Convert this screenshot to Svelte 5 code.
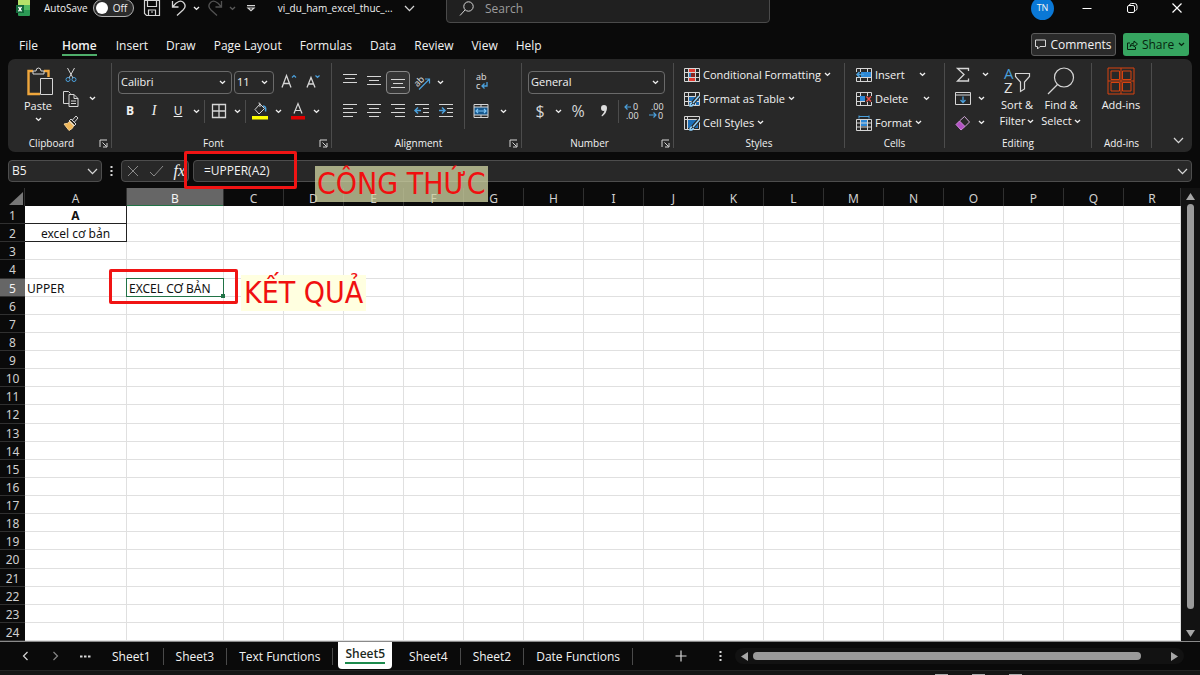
<script lang="ts">
	const menus = ['File', 'Home', 'Insert', 'Draw', 'Page Layout', 'Formulas', 'Data', 'Review', 'View', 'Help'];
	const columns = 'ABCDEFGHIJKLMNOPQR'.split('');
	const rows = Array.from({ length: 24 }, (_, i) => i + 1);
	const sheets = ['Sheet1', 'Sheet3', 'Text Functions', 'Sheet5', 'Sheet4', 'Sheet2', 'Date Functions'];

	const cells: Record<string, string> = {
		A1: 'A',
		A2: 'excel cơ bản',
		A5: 'UPPER',
		B5: 'EXCEL CƠ BẢN'
	};

	let activeMenu = $state('Home');
	let activeSheet = $state('Sheet5');
	let formula = $state('=UPPER(A2)');
	let autosave = $state(false);
</script>

{#snippet chevron()}
	<svg class="chev" width="7" height="5" viewBox="0 0 7 5"><path d="M1 1l2.5 2.4L6 1" /></svg>
{/snippet}

{#snippet bigChevron()}
	<svg width="11" height="7" viewBox="0 0 11 7"><path d="M1 1l4.5 4.6L10 1" stroke-width="1.3" /></svg>
{/snippet}

{#snippet drop(label: string)}
	<button class="drop" aria-label={label}>{@render chevron()}</button>
{/snippet}

{#snippet launcher(label: string)}
	<button class="launcher" aria-label={label}>
		<svg width="9" height="9" viewBox="0 0 9 9"><path d="M8 1H1v7M3.5 3.5L7.5 7.5M8 4v4H4" /></svg>
	</button>
{/snippet}

{#snippet dots()}
	<svg class="dots" width="3" height="12" viewBox="0 0 3 12"><path d="M1.5 1v2M1.5 5v2M1.5 9v2" stroke-width="2" /></svg>
{/snippet}

{#snippet lines(list: number[][])}
	<svg width="16" height="16" viewBox="0 0 16 16">
		{#each list as [x1, x2, y]}
			<path d="M{x1} {y}.5H{x2}" />
		{/each}
	</svg>
{/snippet}

{#snippet tableIcon()}
	<path d="M.5 1.5h15v13H.5zM.5 5.5h15M.5 10.5h15M4.5 1.5v13M11.5 1.5v13" />
{/snippet}

<div class="app">
	<header class="titlebar">
		<div class="quick">
			<svg class="logo" width="14" height="17" viewBox="0 0 14 17">
				<path d="M2 0h12v5H2z" fill="#b6e26a" stroke="none" />
				<path d="M2 5h12v10q0 1-1 1H3q-1 0-1-1z" fill="#2c9a55" stroke="none" />
				<path d="M8 5h6v5H8z" fill="#51bb62" stroke="none" />
				<path d="M0 5h8v8H0z" fill="#12683a" stroke="none" />
				<path d="M2.5 6.8l3 4.6M5.5 6.8l-3 4.6" stroke="#fff" stroke-width="1.3" />
			</svg>
			<label class="autosave">
				AutoSave
				<input type="checkbox" bind:checked={autosave} />
				<span class="switch"><i></i>{autosave ? 'On' : 'Off'}</span>
			</label>
			<button class="tool" aria-label="Save">
				<svg width="16" height="16" viewBox="0 0 16 16"><path d="M.5.5h15v15h-13l-2-2zM3.5.5v6h9v-6M4.5 15.5v-5.5h7v5.5M7 12h2" stroke-width="1.2" /></svg>
			</button>
			<button class="tool undo" aria-label="Undo">
				<svg width="16" height="16" viewBox="0 0 16 16"><path d="M1.5 1v6h6M2 6.5C6 1 10 0 12.5 2.5s2 5-.5 7.500l-6 5.500" stroke-width="1.3" /></svg>
			</button>
			{@render drop('Undo history')}
			<button class="tool dim" aria-label="Redo">
				<svg width="16" height="16" viewBox="0 0 16 16"><path d="M14.5 1v6h-6M14 6.5C10 1 6 0 3.5 2.5s-2 5 .5 7.500l6 5.500" stroke-width="1.3" /></svg>
			</button>
			<span class="dim">{@render drop('Redo history')}</span>
			<button class="tool customise" aria-label="Customize Quick Access Toolbar">
				<svg width="8" height="7" viewBox="0 0 8 7"><path d="M0 .7h8M1 3l3 2.8L7 3z" stroke-width="1.2" /></svg>
			</button>
			<button class="filename">vi_du_ham_excel_thuc_... {@render bigChevron()}</button>
		</div>
		<label class="search">
			<svg width="16" height="16" viewBox="0 0 16 16"><circle cx="9.5" cy="5.5" r="4.7" /><path d="M6 9L1 14.5" /></svg>
			<input type="text" placeholder="Search" aria-label="Search" />
		</label>
		<div class="window">
			<button class="avatar">TN</button>
			<button aria-label="Minimize"><svg width="12" height="12" viewBox="0 0 12 12"><path d="M1.5 6.5h9" /></svg></button>
			<button aria-label="Restore"><svg width="12" height="12" viewBox="0 0 12 12"><rect x="1.5" y="3.5" width="7" height="7" rx="1.5" /><path d="M3.5 3q.3-1.500 2-1.500h3q2.500 0 2.500 2.500v2.500q0 1.500-1.500 2" /></svg></button>
			<button aria-label="Close"><svg width="12" height="12" viewBox="0 0 12 12"><path d="M1.5 1.5l9 9M10.500 1.500l-9 9" stroke-width="1.2" /></svg></button>
		</div>
	</header>

	<nav class="menubar">
		{#each menus as menu}
			<button class="menu" class:active={menu === activeMenu} onclick={() => (activeMenu = menu)}>{menu}</button>
		{/each}
		<button class="comments">
			<svg width="11" height="11" viewBox="0 0 11 11"><path d="M.5 1h10v6.500H5L2.500 10V7.500h-2z" /></svg>
			Comments
		</button>
		<button class="share">
			<svg width="11" height="11" viewBox="0 0 11 11"><path d="M3 4H.5v6.500h8V8M3 7.500Q3.500 4 7 4V2l3.500 3L7 8V6Q4.500 6 3 7.500z" /></svg>
			Share {@render chevron()}
		</button>
	</nav>

	<div class="ribbon">
		<section class="group clipboard">
			<div class="body">
				<button class="big">
					<svg width="28" height="30" viewBox="0 0 28 30">
						<path d="M7 4H2.500v23H14M18 4h4.500v6" stroke="#efa63c" stroke-width="2.400" />
						<path d="M7 7V4h3q0-3 2.500-3T15 4h3v3z" />
						<path d="M14.500 11.500h12v16h-12z" fill="#282828" />
					</svg>
					<span>Paste</span>
					{@render chevron()}
				</button>
				<div class="stack">
					<button class="tool" aria-label="Cut">
						<svg width="12" height="16" viewBox="0 0 12 16"><path d="M2.500 1L8 11M9.500 1L4 11" /><circle cx="3" cy="12.500" r="2" stroke="#4ba0dc" /><circle cx="9" cy="12.500" r="2" stroke="#4ba0dc" /></svg>
					</button>
					<button class="tool" aria-label="Copy">
						<svg width="16" height="16" viewBox="0 0 16 16"><path d="M6 12.500H.5V.5h5l2 2" /><path d="M6 3.500h5l4 4v8H6zM11 3.500v4h4M8 10h5M8 12.500h5" /></svg>
					</button>
					<button class="tool" aria-label="Format Painter">
						<svg width="16" height="16" viewBox="0 0 16 16"><path d="M1 9q4 0 6-3l4 4q-1 4-5 5.500z" fill="#efb75b" stroke="#f3cf90" /><path d="M6 6l2-2 5 5-2 2zM9.500 5L13 1l2 2-3.500 4" /></svg>
					</button>
				</div>
				{@render drop('Copy options')}
			</div>
			<footer>Clipboard {@render launcher('Clipboard settings')}</footer>
		</section>

		<section class="group font">
			<div class="body rows">
				<div class="line">
					<label class="combo family">
						<select aria-label="Font"><option>Calibri</option></select>{@render chevron()}
					</label>
					<label class="combo size">
						<select aria-label="Font size"><option>11</option></select>{@render chevron()}
					</label>
					<button class="tool grow" aria-label="Increase font size">
						<svg width="16" height="16" viewBox="0 0 16 16"><path d="M0 13.500L4.500 1.500 9 13.500M1.500 9.500h6" stroke-width="1.300" /><path d="M10 3.500l2-2 2 2" stroke="#4ba0dc" stroke-width="1.200" /></svg>
					</button>
					<button class="tool" aria-label="Decrease font size">
						<svg width="16" height="16" viewBox="0 0 16 16"><path d="M1 13.500L5 3.500 9 13.500M2.500 10h5" stroke-width="1.300" /><path d="M9.500 1.500l2 2 2-2" stroke="#4ba0dc" stroke-width="1.200" /></svg>
					</button>
				</div>
				<div class="line">
					<button class="tool"><b>B</b></button>
					<button class="tool serif"><i>I</i></button>
					<button class="tool"><u>U</u></button>
					{@render drop('Underline style')}
					<span class="rule"></span>
					<button class="tool" aria-label="Borders">
						<svg width="16" height="16" viewBox="0 0 16 16"><path d="M1.500 1.500h13v13h-13zM8 1.500v13M1.500 8h13" stroke-width="1.300" /></svg>
					</button>
					{@render drop('Border style')}
					<span class="rule"></span>
					<button class="tool" aria-label="Fill color">
						<svg width="16" height="18" viewBox="0 0 16 18"><path d="M3 7.500L8 2l4.500 4.500L7 12z" /><path d="M8 5V2q0-1.500-1.500-1" /><path d="M11 4q3.500 0 2.500 5.500" stroke="#4ba0dc" stroke-width="1.500" /><path d="M0 14h16v3.500H0z" fill="#ffff00" stroke="none" /></svg>
					</button>
					{@render drop('Fill colors')}
					<button class="tool fontcolor" aria-label="Font color">
						<svg width="16" height="18" viewBox="0 0 16 18"><path d="M4 11.500L8 1.500l4 10M5.500 8.500h5" stroke-width="1.200" /><path d="M1 14h14v3.500H1z" fill="#e00000" stroke="none" /></svg>
					</button>
					{@render drop('Font colors')}
				</div>
			</div>
			<footer>Font {@render launcher('Font settings')}</footer>
		</section>

		<section class="group alignment">
			<div class="body split">
				<div class="rows">
					<div class="line">
						<button class="tool" aria-label="Top align">{@render lines([[1, 15, 0], [3, 13, 4], [1, 15, 8]])}</button>
						<button class="tool" aria-label="Middle align">{@render lines([[1, 15, 2], [3, 13, 6], [1, 15, 10]])}</button>
						<button class="tool pressed" aria-label="Bottom align">{@render lines([[1, 15, 5], [3, 13, 9], [1, 15, 13]])}</button>
						<button class="tool" aria-label="Orientation">
							<svg width="17" height="17" viewBox="0 0 17 17"><text x="1" y="11" transform="rotate(-45 5 9)" font-size="9">ab</text><path d="M5 15.500L15 5.500M11 5h4.500v4.500" stroke="#4ba0dc" stroke-width="1.200" /></svg>
						</button>
						{@render drop('Orientation options')}
					</div>
					<div class="line">
						<button class="tool" aria-label="Align left">{@render lines([[1, 15, 1], [1, 11, 5], [1, 15, 9], [1, 11, 13]])}</button>
						<button class="tool" aria-label="Center">{@render lines([[1, 15, 1], [3, 13, 5], [1, 15, 9], [3, 13, 13]])}</button>
						<button class="tool" aria-label="Align right">{@render lines([[1, 15, 1], [5, 15, 5], [1, 15, 9], [5, 15, 13]])}</button>
						<button class="tool" aria-label="Decrease indent">
							<svg width="16" height="16" viewBox="0 0 16 16"><path d="M1 1.500h14M9 5.500h6M9 9.500h6M1 13.500h14" /><path d="M7 7.500H1M4 4.500l-3 3 3 3" stroke="#4ba0dc" stroke-width="1.500" /></svg>
						</button>
						<button class="tool" aria-label="Increase indent">
							<svg width="16" height="16" viewBox="0 0 16 16"><path d="M1 1.500h14M9 5.500h6M9 9.500h6M1 13.500h14" /><path d="M1 7.500h6M4 4.500l3 3-3 3" stroke="#4ba0dc" stroke-width="1.500" /></svg>
						</button>
					</div>
				</div>
				<span class="rule tall"></span>
				<div class="rows">
					<div class="line">
						<button class="tool" aria-label="Wrap text">
							<svg width="16" height="20" viewBox="0 0 16 20"><text x="3" y="8" font-size="9">ab</text><text x="3" y="17" font-size="9">c</text><path d="M14 10v4H9M11.500 11.500L9 14l2.500 2.500" stroke="#4ba0dc" stroke-width="1.300" /></svg>
						</button>
					</div>
					<div class="line">
						<button class="tool" aria-label="Merge and center">
							<svg width="16" height="16" viewBox="0 0 16 16"><path d="M1 4h14v8H1z" fill="#15578d" stroke="none" /><path d="M1 1.500h14v13H1zM1 4h14M1 12h14M8 1.500V4M8 12v2.500" /><path d="M3 8h10M5 6L3 8l2 2M11 6l2 2-2 2" stroke="#7cc4f5" stroke-width="1.200" /></svg>
						</button>
						<span class="gap"></span>
						{@render drop('Merge options')}
					</div>
				</div>
			</div>
			<footer>Alignment {@render launcher('Alignment settings')}</footer>
		</section>

		<section class="group number">
			<div class="body rows">
				<div class="line">
					<label class="combo format">
						<select aria-label="Number format"><option>General</option></select>{@render chevron()}
					</label>
				</div>
				<div class="line">
					<button class="tool glyph">$</button>
					{@render drop('Currency')}
					<button class="tool glyph wide">%</button>
					<button class="tool comma" aria-label="Comma style">
						<svg width="8" height="14" viewBox="0 0 8 14"><path d="M1 4a3 3 0 0 1 6 0q0 5-5 8.500l-.5-1Q4 9 4.500 6.800 1 7.500 1 4z" fill="#ddd" stroke="none" /></svg>
					</button>
					<span class="rule"></span>
					<button class="tool" aria-label="Increase decimal">
						<svg width="18" height="20" viewBox="0 0 18 20"><text x="9" y="9" font-size="9">0</text><text x="2" y="18" font-size="9">.00</text><path d="M7 6H1M3.500 3.500L1 6l2.500 2.500" stroke="#4ba0dc" stroke-width="1.200" /></svg>
					</button>
					<button class="tool" aria-label="Decrease decimal">
						<svg width="18" height="20" viewBox="0 0 18 20"><text x="3" y="9" font-size="9">.00</text><text x="10" y="18" font-size="9">0</text><path d="M1 14h7M5.500 11.500L8 14l-2.500 2.500" stroke="#4ba0dc" stroke-width="1.200" /></svg>
					</button>
				</div>
			</div>
			<footer>Number {@render launcher('Number settings')}</footer>
		</section>

		<section class="group styles">
			<div class="body list">
				<button>
					<svg width="16" height="16" viewBox="0 0 16 16"><path d="M4 1h8v4H4zM4 10h8v4H4z" fill="#e23b31" stroke="none" /><path d="M4 5h3v5H4z" fill="#2f7fc4" stroke="none" /><path d="M7 5h5v5H7z" fill="#8c2520" stroke="none" />{@render tableIcon()}<path d="M5 2h6v3H5zM5 11h6v3H5z" fill="#e23b31" stroke="none" /></svg>
					Conditional Formatting {@render chevron()}
				</button>
				<button>
					<svg width="16" height="16" viewBox="0 0 16 16"><path d="M4 5h11v9H4z" fill="#1d6fb8" stroke="none" />{@render tableIcon()}<path d="M15 5L8 13l-2 2" stroke="#282828" stroke-width="4" /><path d="M15 5L9 12M8 12q-2 0-2 3 3 0 3.500-2" stroke="#8fd0fa" stroke-width="1.500" /></svg>
					Format as Table {@render chevron()}
				</button>
				<button>
					<svg width="16" height="16" viewBox="0 0 16 16"><path d="M3 4h11v9H3z" fill="#1d6fb8" stroke="none" /><path d="M.5 1.500h15v13H.5zM.5 4.500h15M3.500 1.500v13" /><path d="M15 5L8 13l-2 2" stroke="#282828" stroke-width="4" /><path d="M15 5L9 12M8 12q-2 0-2 3 3 0 3.500-2" stroke="#8fd0fa" stroke-width="1.500" /></svg>
					Cell Styles {@render chevron()}
				</button>
			</div>
			<footer>Styles</footer>
		</section>

		<section class="group cells">
			<div class="body list">
				<button>
					<svg width="16" height="16" viewBox="0 0 16 16">{@render tableIcon()}<path d="M5 5h10v5H5z" fill="#2b88d8" stroke="none" /><path d="M0 5h5v5H0z" fill="#282828" stroke="none" /><path d="M8 7.500H1M3.500 5L1 7.500 3.500 10" stroke="#4ba0dc" stroke-width="1.500" /></svg>
					<span class="insert">Insert</span> {@render chevron()}
				</button>
				<button>
					<svg width="16" height="16" viewBox="0 0 16 16">{@render tableIcon()}<path d="M4 5h6v5H4z" fill="#2b88d8" stroke="none" /><path d="M9 5h7v6H9z" fill="#282828" stroke="none" /><path d="M10.500 5.500l4.500 5M15 5.500l-4.500 5" stroke="#e8504a" stroke-width="1.500" /></svg>
					<span class="delete">Delete</span> {@render chevron()}
				</button>
				<button>
					<svg width="16" height="16" viewBox="0 0 16 16"><path d="M4 5h8v6H4z" fill="#2b88d8" stroke="none" /><path d="M.5 4.500h15v11H.5zM.5 8h15M.5 12h15M4.500 4.500v11M11.500 4.500v11" /><path d="M3 .500v3M13 .500v3M3 1.500h10" stroke="#4ba0dc" /></svg>
					Format {@render chevron()}
				</button>
			</div>
			<footer>Cells</footer>
		</section>

		<section class="group editing">
			<div class="body">
				<div class="stack">
					<div class="line">
						<button class="tool" aria-label="AutoSum"><svg width="14" height="16" viewBox="0 0 14 16"><path d="M12.500 4V1.500h-11L8 7.500l-6.500 6.500h11V11.500" stroke-width="1.300" /></svg></button>
						<span class="gap"></span>
						{@render drop('AutoSum options')}
					</div>
					<div class="line">
						<button class="tool" aria-label="Fill"><svg width="16" height="14" viewBox="0 0 16 14"><path d="M.5.5h15v12H.5zM.5 3h15" /><path d="M8 4.500v6M5.500 8L8 10.500 10.500 8" stroke="#4ba0dc" stroke-width="1.300" /></svg></button>
						{@render drop('Fill options')}
					</div>
					<div class="line">
						<button class="tool" aria-label="Clear"><svg width="16" height="16" viewBox="0 0 16 16"><path d="M1 9.500L4.500 6l5.500 5.500L6 15z" fill="#b352c4" stroke="#d08bdc" /><path d="M4.500 6L9.500 1.500l5 5.500-4.500 4.500" stroke="#d0a8d8" /></svg></button>
						{@render drop('Clear options')}
					</div>
				</div>
				<button class="big">
					<svg width="28" height="28" viewBox="0 0 28 28"><text x="1" y="12" font-size="15" class="blue">A</text><text x="1" y="26" font-size="15">Z</text><path d="M12.500 6.500h14v3l-5 5.500v7l-4 2.500V15l-5-5.500z" stroke-width="1.200" /></svg>
					<span>Sort &amp;</span>
					<span class="second">Filter {@render chevron()}</span>
				</button>
				<button class="big">
					<svg width="30" height="28" viewBox="0 0 30 28"><circle cx="18" cy="10.500" r="9.500" stroke-width="1.200" /><path d="M11.500 17.500L2 27" stroke-width="1.200" /></svg>
					<span>Find &amp;</span>
					<span class="second">Select {@render chevron()}</span>
				</button>
			</div>
			<footer>Editing</footer>
		</section>

		<section class="group addins">
			<div class="body">
				<button class="big">
					<svg class="orange" width="28" height="28" viewBox="0 0 28 28"><path d="M1 1h26v26H1zM4 4h8.500v8.500H4zM15.500 4H24v8.500h-8.500zM4 15.500h8.500V24H4zM15.500 15.500H24V24h-8.500zM14 1v26M1 14h26" /></svg>
					<span>Add-ins</span>
				</button>
			</div>
			<footer>Add-ins</footer>
		</section>
		<button class="collapse" aria-label="Collapse the ribbon">{@render bigChevron()}</button>
	</div>

	<div class="formulabar">
		<label class="namebox">
			<input type="text" value="B5" aria-label="Name box" />
			{@render bigChevron()}
		</label>
		{@render dots()}
		<div class="entry">
			<button aria-label="Cancel"><svg width="12" height="12" viewBox="0 0 12 12"><path d="M1 1l10 10M11 1L1 11" /></svg></button>
			<button aria-label="Enter"><svg width="15" height="12" viewBox="0 0 15 12"><path d="M1 7l4 4L14 1" /></svg></button>
			<button class="fx">fx</button>
		</div>
		<label class="formula">
			<input type="text" bind:value={formula} aria-label="Formula" />
			{@render bigChevron()}
		</label>
		<div class="frame formula-frame"></div>
		<div class="note formula-note">CÔNG THỨC</div>
	</div>

	<main class="sheet">
		<table>
			<colgroup>
				<col class="col-rows" />
				<col class="col-a" />
				<col class="col-b" />
				{#each columns.slice(2, -1) as _}
					<col class="col" />
				{/each}
				<col />
			</colgroup>
			<thead>
				<tr>
					<th class="corner"><svg width="14" height="13" viewBox="0 0 14 13"><path d="M14 0v13H0z" fill="#777" stroke="none" /></svg></th>
					{#each columns as column}
						<th scope="col" class:selected={column === 'B'}>{column}</th>
					{/each}
				</tr>
			</thead>
			<tbody>
				{#each rows as row}
					<tr>
						<th scope="row" class:selected={row === 5}>{row}</th>
						{#each columns as column}
							{@const id = column + row}
							<td class:boxed={id === 'A1' || id === 'A2'} class:strong={id === 'A1'} class:current={id === 'B5'}>
								{cells[id] ?? ''}
								{#if id === 'B5'}
									<i class="cursor"></i>
									<div class="frame result-frame"></div>
									<div class="note result-note">KẾT QUẢ</div>
								{/if}
							</td>
						{/each}
					</tr>
				{/each}
			</tbody>
		</table>
		<div class="vscroll">
			<svg width="9" height="7" viewBox="0 0 9 7"><path d="M4.500 0L9 7H0z" /></svg>
			<div class="track"><div class="thumb"></div></div>
			<svg width="9" height="7" viewBox="0 0 9 7"><path d="M4.500 7L9 0H0z" /></svg>
		</div>
	</main>

	<div class="tabbar">
		<button class="step" aria-label="Previous sheet"><svg width="7" height="10" viewBox="0 0 7 10"><path d="M5.500 1l-4 4 4 4" stroke-width="1.200" /></svg></button>
		<button class="step next" aria-label="Next sheet"><svg width="7" height="10" viewBox="0 0 7 10"><path d="M1.500 1l4 4-4 4" stroke-width="1.200" /></svg></button>
		<button class="step" aria-label="All sheets"><svg width="11" height="3" viewBox="0 0 11 3"><path d="M0 1.500h2.500M4 1.500h2.500M8 1.500h2.500" stroke-width="2" /></svg></button>
		<div class="tabs">
			{#each sheets as sheet}
				<button class="tab" class:active={sheet === activeSheet} onclick={() => (activeSheet = sheet)}><span>{sheet}</span></button>
			{/each}
		</div>
		<button class="add" aria-label="New sheet"><svg width="12" height="12" viewBox="0 0 12 12"><path d="M6 .5v11M.5 6h11" stroke-width="1.200" /></svg></button>
		{@render dots()}
		<div class="hscroll">
			<svg width="7" height="9" viewBox="0 0 7 9"><path d="M0 4.500L7 0v9z" /></svg>
			<div class="track"><div class="thumb"></div></div>
			<svg width="7" height="9" viewBox="0 0 7 9"><path d="M7 4.500L0 0v9z" /></svg>
		</div>
	</div>
	<div class="status"><i></i><i></i><i></i></div>
</div>

<style>
	:global(body) {
		margin: 0;
		background: #0a0a0a;
	}

	.app {
		display: flex;
		flex-direction: column;
		height: 100vh;
		overflow: hidden;
		background: #0a0a0a;
		color: #f2f2f2;
		font: 11px/16px 'Open Sans', 'Noto Sans', sans-serif;
	}

	button,
	input,
	select {
		margin: 0;
		padding: 0;
		border: 0;
		background: none;
		color: inherit;
		font: inherit;
		outline: none;
	}

	button {
		display: flex;
		align-items: center;
		justify-content: center;
		white-space: nowrap;
	}

	svg {
		display: block;
		flex: none;
		overflow: visible;
		fill: none;
		stroke: #d6d6d6;
	}

	svg text {
		fill: #e2e2e2;
		stroke: none;
	}

	svg .blue {
		fill: #4ba0dc;
	}

	svg.orange {
		stroke: #d8430e;
	}

	svg.chev {
		stroke: #f0f0f0;
		stroke-width: 1.4;
	}

	.dim {
		opacity: 0.35;
	}

	/* title bar */
	.titlebar {
		display: flex;
		align-items: center;
		height: 16px;
		padding-bottom: 14px;
	}

	.quick {
		display: flex;
		align-items: center;
		width: 430px;
		padding-left: 16px;
	}

	.autosave {
		display: flex;
		align-items: center;
		gap: 5px;
		margin: 0 6px 0 14px;
		font-size: 10px;
	}

	.autosave input {
		position: absolute;
		opacity: 0;
	}

	.switch {
		display: flex;
		align-items: center;
		gap: 5px;
		box-sizing: border-box;
		width: 41px;
		height: 18px;
		padding-left: 2px;
		border: 1px solid #b0b0b0;
		border-radius: 9px;
		background: #2b2b2b;
	}

	.switch i {
		width: 12px;
		height: 12px;
		border-radius: 50%;
		background: #fff;
	}

	.tool {
		width: 24px;
		height: 23px;
	}

	.tool.undo {
		margin-left: 3px;
	}

	.drop {
		width: 12px;
		height: 22px;
	}

	.filename {
		gap: 11px;
		margin-left: 15px;
		font-size: 10px;
	}

	.search {
		display: flex;
		align-items: center;
		gap: 10px;
		box-sizing: border-box;
		flex: 0 1 324px;
		height: 30px;
		padding: 2px 12px 0;
		border: 1px solid #4a4a4a;
		border-radius: 4px;
		background: #202020;
	}

	.search input {
		flex: 1;
		min-width: 0;
		font-size: 12px;
	}

	.search input::placeholder {
		color: #9c9c9c;
	}

	.window {
		display: flex;
		align-items: center;
		gap: 21px;
		margin-left: auto;
		padding-right: 11px;
	}

	.window button {
		width: 24px;
		height: 24px;
	}

	.window svg {
		stroke: #fff;
	}

	.window .avatar {
		width: 23px;
		height: 23px;
		border-radius: 50%;
		background: #0a78d6;
		font-size: 9px;
	}

	/* menus */
	.menubar {
		display: flex;
		align-items: center;
		gap: 18px;
		height: 29px;
		padding: 0 11px 0 19px;
		font-size: 12px;
	}

	.menu {
		height: 21px;
		margin-top: 2px;
		padding-top: 3px;
		border-bottom: 2px solid transparent;
	}

	.menu:first-child {
		margin-right: 6px;
	}

	.menu.active {
		margin-right: 1px;
		border-color: #4fae6b;
		font-weight: 600;
	}

	.comments,
	.share {
		box-sizing: border-box;
		height: 23px;
		border-radius: 3px;
	}

	.comments {
		gap: 4px;
		width: 85px;
		margin-left: auto;
		border: 1px solid #5c5c5c;
		background: #2a2a2a;
	}

	.share {
		gap: 4px;
		width: 66px;
		margin-left: -11px;
		background: #36a560;
		color: #06240f;
	}

	.share svg {
		stroke: #06240f;
	}

	/* ribbon */
	.ribbon {
		display: flex;
		height: 93px;
		margin: 0 8px;
		border-radius: 7px;
		background: #282828;
	}

	.group {
		display: flex;
		flex-direction: column;
		box-sizing: border-box;
		margin: 4px 0;
		border-right: 1px solid #4c4c4c;
	}

	.clipboard {
		width: 104px;
	}

	.font {
		width: 220px;
	}

	.alignment {
		width: 190px;
	}

	.number {
		width: 152px;
	}

	.styles {
		width: 171px;
	}

	.cells {
		width: 100px;
	}

	.editing {
		width: 147px;
	}

	.addins {
		width: 60px;
	}

	.body {
		display: flex;
		flex: none;
		height: 71px;
	}

	.group footer {
		display: grid;
		flex: none;
		grid-template-columns: 1fr auto;
		font-size: 10px;
		line-height: 18px;
		text-align: center;
	}

	.launcher {
		width: 16px;
		height: 18px;
	}

	.line {
		display: flex;
		align-items: center;
	}

	.rows {
		display: flex;
		flex-direction: column;
		justify-content: center;
		gap: 6px;
	}

	.body.rows {
		padding-left: 6px;
	}

	.number .body {
		padding-left: 6px;
	}

	.body.rows,
	.split .rows {
		box-sizing: border-box;
		height: 71px;
		padding-bottom: 4px;
	}

	.split {
		align-items: center;
		padding-left: 6px;
	}

	.rule {
		width: 1px;
		height: 23px;
		margin: 0 2px;
		background: #4c4c4c;
	}

	.rule.tall {
		height: 60px;
		margin: 0 4px 0 6px;
	}

	.gap {
		width: 4px;
	}

	.tool.wide {
		width: 28px;
	}

	.tool.grow {
		margin-left: 4px;
	}

	.tool.fontcolor {
		margin-left: 2px;
	}

	.tool b,
	.tool u {
		font-size: 12px;
	}

	.tool.serif {
		font: 14px/16px 'Liberation Serif', serif;
	}

	.tool.pressed {
		box-sizing: border-box;
		border: 1px solid #8a8a8a;
		border-radius: 4px;
		background: #353535;
	}

	.tool.glyph {
		color: #d6d6d6;
		font-size: 16px;
	}

	.combo {
		display: grid;
		grid-template-columns: 1fr 12px;
		align-items: center;
		box-sizing: border-box;
		height: 23px;
		border: 1px solid #6a6a6a;
		border-radius: 4px;
	}

	.combo select {
		grid-area: 1 / 1 / 2 / 3;
		padding-left: 2px;
		appearance: none;
	}

	.combo svg {
		grid-area: 1 / 2;
		pointer-events: none;
	}

	.combo.family {
		width: 114px;
	}

	.combo.size {
		width: 40px;
		margin-left: 2px;
	}

	.combo.format {
		width: 137px;
	}

	.stack,
	.list {
		display: flex;
		flex-direction: column;
		gap: 1px;
	}

	.list {
		padding-left: 10px;
	}

	.list button {
		justify-content: flex-start;
		gap: 3px;
		height: 23px;
	}

	.cells .list {
		padding-left: 11px;
	}

	.insert {
		width: 41px;
		text-align: left;
	}

	.delete {
		width: 45px;
		text-align: left;
	}

	.big {
		flex-direction: column;
		justify-content: flex-start;
		width: 44px;
		padding-top: 4px;
	}

	.big svg:first-child {
		margin-bottom: 2px;
	}

	.clipboard .big {
		gap: 3px;
		width: 60px;
	}

	.clipboard .big svg:first-child {
		margin: 0 -4px -2px 0;
	}

	.clipboard .stack {
		margin-right: 3px;
		margin-left: -9px;
	}

	.clipboard .body > .drop {
		align-self: center;
	}

	.editing .stack {
		margin: 0 4px 0 6px;
	}

	.second {
		display: flex;
		align-items: center;
		gap: 2px;
	}

	.big .second svg {
		margin: 0;
	}

	.addins .big {
		width: 58px;
	}

	.collapse {
		align-self: flex-end;
		margin: 0 8px 0 auto;
		height: 24px;
	}

	/* formula bar */
	.formulabar {
		position: relative;
		display: flex;
		align-items: center;
		height: 22px;
		padding: 8px 8px 6px;
		font-size: 12px;
	}

	.namebox,
	.entry,
	.formula {
		display: flex;
		align-items: center;
		box-sizing: border-box;
		height: 22px;
		border: 1px solid #4d4d4d;
		border-radius: 4px;
		background: #282828;
	}

	.namebox {
		width: 94px;
		padding: 0 3px;
	}

	.namebox input,
	.formula input {
		flex: 1;
		min-width: 0;
	}

	.dots {
		margin: 0 8px;
	}

	.entry {
		justify-content: space-between;
		width: 68px;
		padding: 0 3px 0 5px;
	}

	.entry svg {
		stroke: #8a8a8a;
	}

	.fx {
		font: italic 16px/20px 'Liberation Serif', serif;
	}

	.formula {
		flex: 1;
		margin-left: 4px;
		padding: 0 3px 0 10px;
	}

	/* red call-outs */
	.frame {
		position: absolute;
		z-index: 1;
		box-sizing: border-box;
		border: 3px solid #f01414;
		border-radius: 2px;
		pointer-events: none;
	}

	.note {
		position: absolute;
		z-index: 1;
		color: #f01010;
		font: 30px/36px 'DejaVu Sans Condensed', 'Noto Sans', sans-serif;
		white-space: nowrap;
	}

	.formula-frame {
		top: -1px;
		left: 184px;
		width: 113px;
		height: 38px;
	}

	.formula-note {
		top: 14px;
		left: 315px;
		padding: 0 2px;
		background: rgba(205, 209, 160, 0.78);
	}

	.result-frame {
		top: -10px;
		left: -18px;
		width: 129px;
		height: 35px;
	}

	.result-note {
		top: -4px;
		left: 114px;
		padding: 0 3px;
		background: #ffffe0;
	}

	/* grid */
	.sheet {
		display: flex;
		flex: 1;
		min-height: 0;
	}

	table {
		flex: 1;
		width: 0;
		height: 100%;
		border-spacing: 0;
		table-layout: fixed;
		background: #fff;
		color: #111;
		font-family: 'Noto Sans', sans-serif;
		font-size: 12px;
		line-height: 14px;
	}

	.col-rows {
		width: 25px;
	}

	.col-a {
		width: 102px;
	}

	.col-b {
		width: 97px;
	}

	.col {
		width: 60px;
	}

	th {
		padding: 3px 0 0;
		border-right: 1px solid #303030;
		background: #0a0a0a;
		color: #d0d0d0;
		font-weight: 400;
	}

	thead th {
		height: 15px;
	}

	tbody th {
		border-right: 0;
		border-bottom: 1px solid #303030;
	}

	.corner svg {
		margin: 0 0 0 9px;
	}

	th.selected {
		background: #666;
		color: #f4f4f4;
	}

	thead th.selected {
		box-shadow: inset 0 -1px #217346;
	}

	td {
		padding: 3px 2px 0;
		border-right: 1px solid #e0e0e0;
		border-bottom: 1px solid #e0e0e0;
		white-space: nowrap;
	}

	td.boxed {
		border-color: #222;
		text-align: center;
	}

	td.strong {
		font-weight: 700;
	}

	td.current {
		position: relative;
	}

	.cursor {
		position: absolute;
		inset: -1px;
		border: 1px solid #217346;
	}

	.cursor::after {
		position: absolute;
		right: -2px;
		bottom: -2px;
		width: 4px;
		height: 4px;
		background: #217346;
		content: '';
	}

	/* scrollbars */
	.vscroll,
	.hscroll {
		display: flex;
		align-items: center;
	}

	.vscroll svg,
	.hscroll svg {
		fill: #a6a6a6;
		stroke: none;
	}

	.track {
		flex: 1;
	}

	.thumb {
		border-radius: 4px;
		background: #9a9a9a;
	}

	.vscroll {
		flex-direction: column;
		gap: 4px;
		width: 19px;
		padding: 5px 0 4px;
		background: #121212;
	}

	.vscroll .thumb {
		width: 7px;
		height: 96%;
	}

	.hscroll {
		flex: 1;
		gap: 5px;
		height: 16px;
		margin-right: 16px;
		padding: 0 6px;
		border-radius: 8px;
		background: #121212;
	}

	.hscroll .thumb {
		width: 94%;
		height: 8px;
	}

	/* sheet tabs */
	.tabbar {
		display: flex;
		align-items: center;
		box-sizing: border-box;
		height: 29px;
		padding-left: 10px;
		border-top: 1px solid #8a8a8a;
		font-size: 12px;
	}

	.step {
		width: 30px;
		height: 28px;
	}

	.step.next {
		opacity: 0.6;
	}

	.tabs {
		display: flex;
		align-items: center;
		align-self: flex-start;
	}

	.tab {
		position: relative;
		height: 28px;
		padding: 2px 13px 0 12px;
	}

	.tab::after {
		position: absolute;
		top: 6px;
		right: 0;
		width: 1px;
		height: 17px;
		background: #4a4a4a;
		content: '';
	}

	.tab.active {
		height: 27px;
		margin: -1px 5px 0;
		padding: 0 7px 2px;
		border-radius: 0 0 4px 4px;
		background: #fff;
		color: #1c2a22;
		font-weight: 600;
	}

	.tab.active::after {
		display: none;
	}

	.tab.active span {
		border-bottom: 2px solid #1c8a4c;
	}

	.add {
		width: 40px;
		height: 28px;
		margin-left: 28px;
	}

	.tabbar > :global(.dots) {
		margin: 0 13px 0 18px;
	}

	.status {
		display: flex;
		align-items: flex-end;
		justify-content: flex-end;
		gap: 24px;
		box-sizing: border-box;
		height: 5px;
		padding-right: 178px;
		border-top: 1px solid #242424;
		background: #151515;
	}

	.status i {
		width: 13px;
		height: 1px;
		background: #aaa;
	}
</style>
